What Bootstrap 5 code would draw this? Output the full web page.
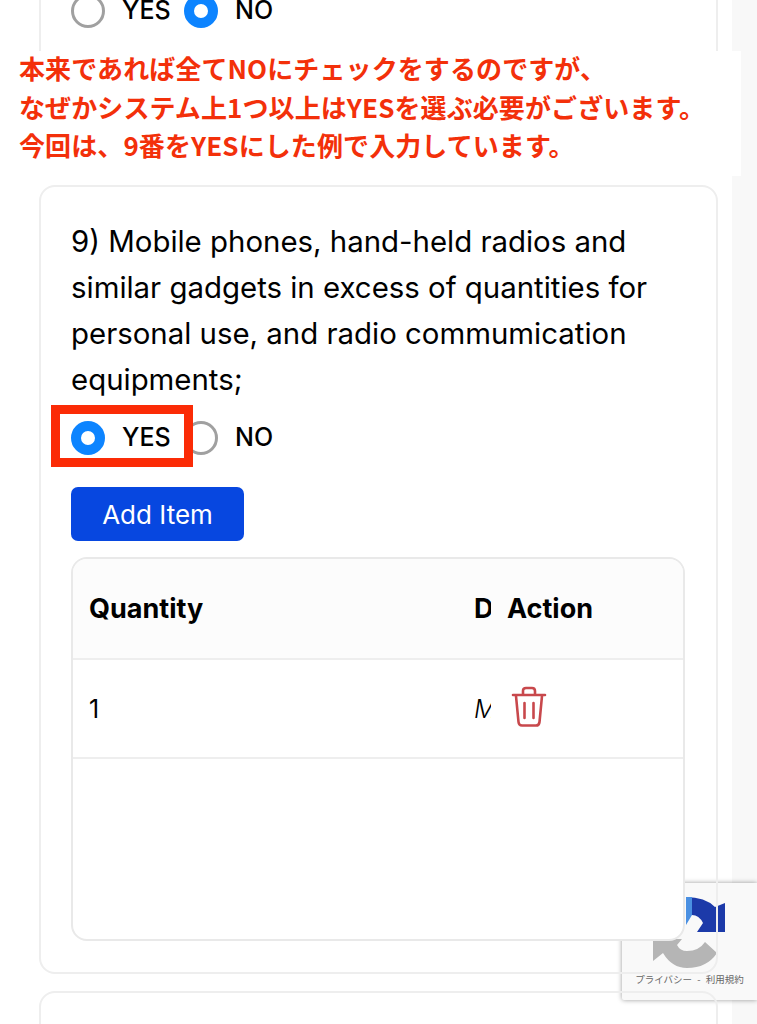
<!DOCTYPE html>
<html lang="ja">
<head>
<meta charset="utf-8">
<title>Form</title>
<link href="https://cdn.jsdelivr.net/npm/bootstrap@5.3.0/dist/css/bootstrap.min.css" rel="stylesheet">
<style>
html,body{height:100%;}
body{background:#fff;font-family:"Inter","Noto Sans",sans-serif;color:#000;overflow:hidden;position:relative;height:1024px;}
.gutter{position:absolute;top:0;right:0;bottom:0;width:25px;background:#f8f8f8;}
.page-col{position:relative;z-index:2;width:679px;margin-left:39px;margin-top:-26px;}
.q-card{border:2px solid #eeeeee;border-radius:16px;background:transparent;padding:32px 31px 31px 30px;margin-bottom:17px;}
.q-card.first{height:193px;border-top:0;padding-top:14px;margin-bottom:18px;border-radius:0 0 16px 16px;}
.q-card.last{height:60px;}
.q-text{font-size:29.4px;line-height:46px;margin:0 0 12px;}
.radio-row{height:46px;gap:17px;font-size:25px;font-weight:500;}
.radio-dot{width:34px;height:34px;border-radius:50%;border:3px solid #a0a0a0;background:#fff;flex:none;}
.radio-dot.on{border:10px solid #0d84ff;}
.radio-item{gap:17px;}
.radio-label{width:45px;white-space:nowrap;}
.red-box{position:absolute;left:-20px;top:-10px;width:142px;height:62px;border:9px solid #fb2b06;}
.add-btn{background:#0747e0;border:0;color:#fff;font-size:26px;font-weight:400;width:173px;height:54px;border-radius:7px;padding:0;margin-top:26px;}
.tbl-box{margin-top:16px;height:384px;width:614px;border:2px solid #e9e9e9;border-radius:16px;background:#fff;overflow:hidden;}
.tbl-head{height:101px;padding-top:2px;background:#fcfcfc;border-bottom:2px solid #eeeeee;font-size:27px;font-weight:700;}
.tbl-row{height:99px;padding-top:2px;border-bottom:2px solid #eeeeee;font-size:25px;}
.c-qty{width:401px;padding-left:16px;flex:none;}
.c-desc{width:17px;overflow:hidden;white-space:nowrap;flex:none;}
.c-act{padding-left:16px;}
.desc-text{font-style:italic;font-weight:300;}
.trash-ic{width:36px;height:42px;margin-left:4px;margin-top:-6px;display:block;}
.banner{position:absolute;z-index:3;left:0;top:51px;width:741px;height:125px;background:#fff;padding:0 19px;color:#f3300a;font-size:26px;font-weight:700;line-height:38.5px;font-family:"Noto Sans CJK JP","Inter",sans-serif;letter-spacing:.1px;white-space:nowrap;}
.banner-text{margin-top:-2px;}
.rc-badge{position:absolute;z-index:1;left:622px;top:883px;width:135px;height:117px;background:#f9f9f9;border-radius:2px 0 0 2px;box-shadow:0 0 5px rgba(0,0,0,.4);}
.rc-logo{position:absolute;left:0;top:0;width:135px;height:117px;}
.rc-links{position:absolute;left:0;right:0;top:89px;text-align:center;font-size:9.5px;color:#666;font-family:"Noto Sans CJK JP",sans-serif;white-space:nowrap;word-spacing:3px;}
</style>
</head>
<body>
<div class="gutter"></div>
<div class="rc-badge">
  <svg class="rc-logo" viewBox="0 0 135 117" aria-hidden="true">
    <path d="M64 14Q83 14 93 24L103 20V49H75L81 40Q77 32 70 32H64z" fill="#1c3aa9"/>
    <path d="M64 14h6v18l-6 10z" fill="#4a90e2"/>
    <path d="M31 56V78L41 70Q50 85 65 85Q85 85 95 70L83 59Q77 68 65 68Q58 68 55 62L60 56z" fill="#b5b5b5"/>
  </svg>
  <div class="rc-links">プライバシー - 利用規約</div>
</div>
<div class="page-col">
  <div class="q-card first">
    <div class="d-flex align-items-center radio-row">
      <div class="d-flex align-items-center radio-item"><span class="radio-dot"></span><span class="radio-label">YES</span></div>
      <div class="d-flex align-items-center radio-item"><span class="radio-dot on"></span><span class="radio-label">NO</span></div>
    </div>
  </div>
  <div class="q-card">
    <p class="q-text">9) Mobile phones, hand-held radios and<br>similar gadgets in excess of quantities for<br>personal use, and radio commumication<br>equipments;</p>
    <div class="d-flex align-items-center radio-row position-relative">
      <div class="d-flex align-items-center radio-item"><span class="radio-dot on"></span><span class="radio-label">YES</span></div>
      <div class="d-flex align-items-center radio-item"><span class="radio-dot"></span><span class="radio-label">NO</span></div>
      <span class="red-box"></span>
    </div>
    <button type="button" class="btn add-btn d-block">Add Item</button>
    <div class="tbl-box">
      <div class="d-flex align-items-center tbl-head"><div class="c-qty">Quantity</div><div class="c-desc">D</div><div class="c-act">Action</div></div>
      <div class="d-flex align-items-center tbl-row"><div class="c-qty">1</div><div class="c-desc desc-text">Mobile</div><div class="c-act">
        <svg class="trash-ic" viewBox="0 0 36 42" fill="none" stroke="#c8484c" stroke-width="2.600" stroke-linecap="round" stroke-linejoin="round" aria-hidden="true"><path d="M2 9h32M12 8V5c0-2 1-3 3-3h6c2 0 3 1 3 3v3M5 10l2.500 26c.2 2 1.500 3.500 3.500 3.500h14c2 0 3.300-1.500 3.500-3.500L31 10M13.500 17v15M22.500 17v15"/></svg>
      </div></div>
    </div>
  </div>
  <div class="q-card last"></div>
</div>
<div class="banner"><div class="banner-text">本来であれば全てNOにチェックをするのですが、<br>なぜかシステム上1つ以上はYESを選ぶ必要がございます。<br>今回は、9番をYESにした例で入力しています。</div></div>
<script src="https://cdn.jsdelivr.net/npm/bootstrap@5.3.0/dist/js/bootstrap.bundle.min.js"></script>
</body>
</html>
